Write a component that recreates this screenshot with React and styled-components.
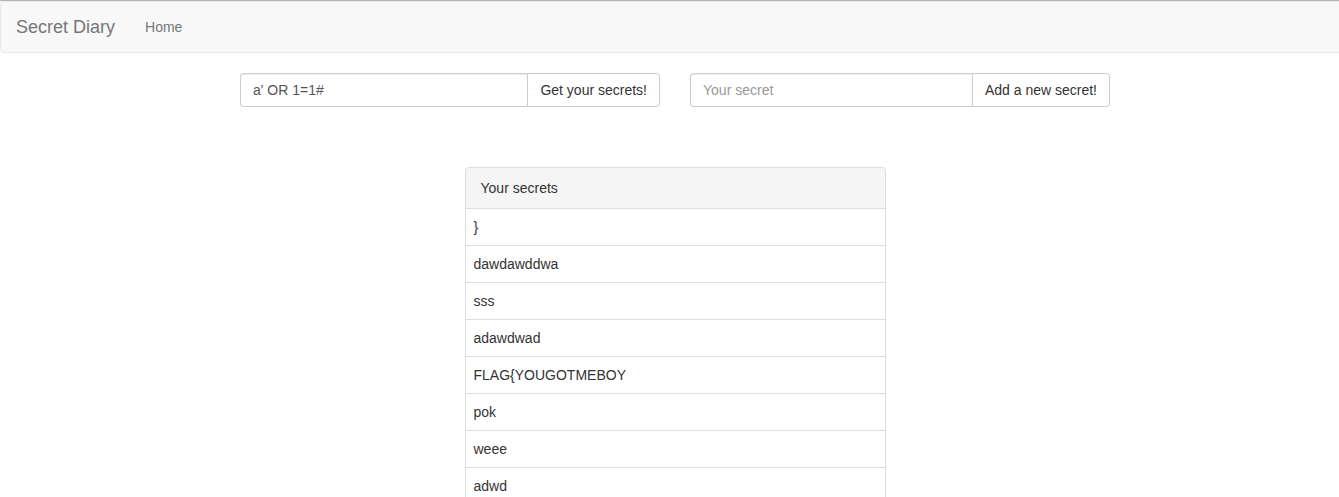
import React from 'react';
import styled, { createGlobalStyle } from 'styled-components';

const GlobalStyle = createGlobalStyle`
  html, body {
    margin: 0;
    padding: 0;
    overflow-x: hidden;
  }
  body {
    font-family: "Liberation Sans", Arial, Helvetica, sans-serif;
    font-size: 14px;
    line-height: 1.42857;
    color: #333;
    background: #fff;
  }
  * { box-sizing: border-box; }
`;

const Page = styled.div`
  width: 1350px;
  border-top: 1px solid #b4b4b4;
`;

const Navbar = styled.nav`
  display: flex;
  align-items: center;
  height: 52px;
  padding: 0 15px;
  background-color: #f8f8f8;
  border: 1px solid #e7e7e7;
  border-radius: 4px;
  margin-bottom: 20px;
`;

const Brand = styled.a`
  font-size: 18px;
  line-height: 20px;
  color: #777;
  text-decoration: none;
  padding: 15px 0;
  margin-right: 30px;
`;

const NavLink = styled.a`
  font-size: 14px;
  line-height: 20px;
  color: #777;
  text-decoration: none;
  padding: 15px 0;
`;

const FormsRow = styled.div`
  display: flex;
  justify-content: center;
  gap: 30px;
`;

const InputGroup = styled.form`
  display: flex;
  width: 420px;
  height: 34px;
`;

const TextInput = styled.input`
  flex: 1;
  min-width: 0;
  height: 34px;
  padding: 6px 12px;
  font-family: inherit;
  font-size: 14px;
  color: #555;
  background: #fff;
  border: 1px solid #ccc;
  border-right: none;
  border-radius: 4px 0 0 4px;
  box-shadow: inset 0 1px 1px rgba(0, 0, 0, 0.075);
  outline: none;
  &::placeholder { color: #999; }
`;

const Button = styled.button`
  height: 34px;
  padding: 6px 12px;
  font-family: inherit;
  font-size: 14px;
  color: #333;
  background: #fff;
  border: 1px solid #ccc;
  border-radius: 0 4px 4px 0;
  white-space: nowrap;
  cursor: pointer;
`;

const Panel = styled.div`
  width: 421px;
  margin: 60px auto 0;
  border: 1px solid #ddd;
  border-radius: 4px;
  background: #fff;
  overflow: hidden;
`;

const PanelHeading = styled.div`
  padding: 10px 15px;
  line-height: 20px;
  background-color: #f5f5f5;
  border-bottom: 1px solid #ddd;
  color: #333;
`;

const Row = styled.div`
  padding: 8px;
  line-height: 20px;
  border-top: ${p => (p.first ? 'none' : '1px solid #ddd')};
`;

const secrets = [
  '}',
  'dawdawddwa',
  'sss',
  'adawdwad',
  'FLAG{YOUGOTMEBOY',
  'pok',
  'weee',
  'adwd',
  'test',
  'hello',
];

export default function App() {
  return (
    <>
      <GlobalStyle />
      <Page>
        <Navbar>
          <Brand href="#">Secret Diary</Brand>
          <NavLink href="#">Home</NavLink>
        </Navbar>
        <FormsRow>
          <InputGroup onSubmit={e => e.preventDefault()}>
            <TextInput defaultValue="a' OR 1=1#" />
            <Button type="submit">Get your secrets!</Button>
          </InputGroup>
          <InputGroup onSubmit={e => e.preventDefault()}>
            <TextInput placeholder="Your secret" />
            <Button type="submit">Add a new secret!</Button>
          </InputGroup>
        </FormsRow>
        <Panel>
          <PanelHeading>Your secrets</PanelHeading>
          {secrets.map((s, i) => (
            <Row key={i} first={i === 0}>{s}</Row>
          ))}
        </Panel>
      </Page>
    </>
  );
}
